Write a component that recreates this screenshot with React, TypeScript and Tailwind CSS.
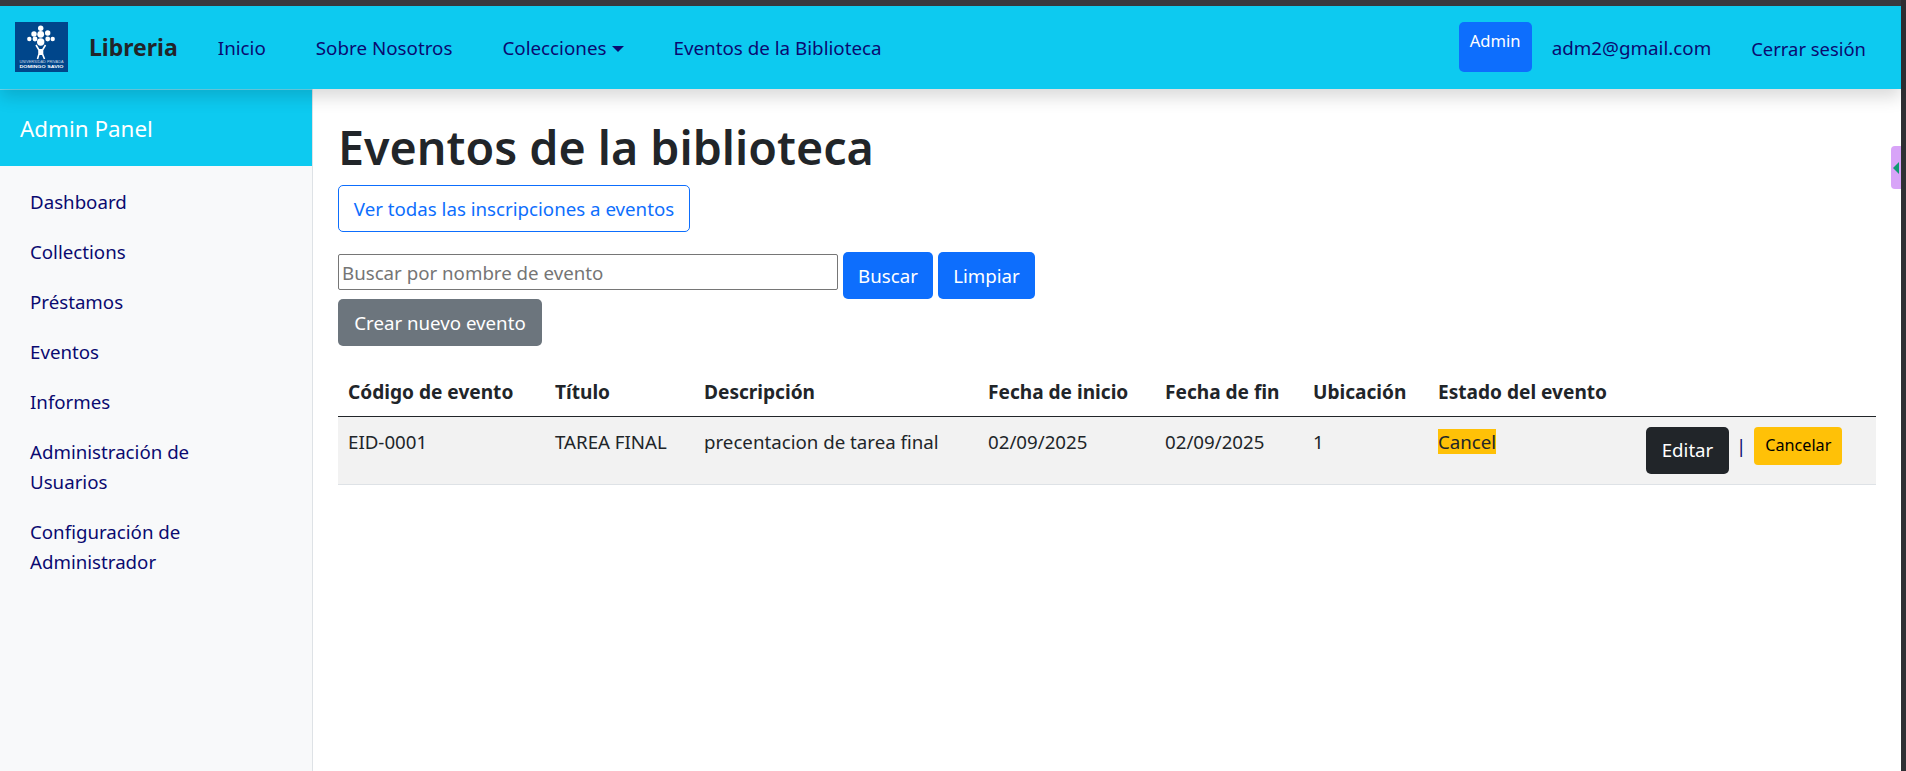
const NAV_LINK = "text-[#0a0a70] whitespace-nowrap pt-[3px]";
const NAV_SIZE = "text-[18.8px]";
const BTN = "inline-flex items-center justify-center rounded-[5px] text-[18.7px] whitespace-nowrap pt-[1px]";
const CELL = "px-[10px] pt-[11px] align-top";

const sideLinks = [
  "Dashboard",
  "Collections",
  "Préstamos",
  "Eventos",
  "Informes",
  "Administración de Usuarios",
  "Configuración de Administrador",
];

const columns = [
  { label: "Código de evento", width: "w-[207px]" },
  { label: "Título", width: "w-[149px]" },
  { label: "Descripción", width: "w-[284px]" },
  { label: "Fecha de inicio", width: "w-[177px]" },
  { label: "Fecha de fin", width: "w-[148px]" },
  { label: "Ubicación", width: "w-[125px]" },
  { label: "Estado del evento", width: "w-[198px]" },
  { label: "", width: "" },
];

function Logo() {
  const dots = [
    [25.7, 6.3, 2.7], [19, 12, 2.7], [25.7, 12.3, 3.4], [32.7, 11, 2.7],
    [14.3, 17, 2.2], [20, 17, 2.4], [25.7, 20, 3.7], [32.7, 17, 2.4], [37.7, 17, 2.2],
  ];
  return (
    <svg width="53" height="50" viewBox="0 0 53 50" className="shrink-0">
      <rect width="53" height="50" fill="#00468b" />
      {dots.map(([cx, cy, r]) => (
        <circle key={`${cx}-${cy}`} cx={cx} cy={cy} r={r} fill="#fff" />
      ))}
      <path
        d="M21 23 L24 28 L24 32 L22.5 37 M30.5 23 L27.5 28 L27.5 32 L29.5 37"
        stroke="#fff"
        strokeWidth="1.6"
        fill="none"
      />
      <rect x="24" y="27" width="3.6" height="6" fill="#fff" />
      <text x="4.5" y="41" textLength="44" lengthAdjust="spacingAndGlyphs" fontSize="2.8" fill="#c9d7e6" fontFamily="Liberation Sans, sans-serif">
        UNIVERSIDAD PRIVADA
      </text>
      <text x="4.5" y="46" textLength="44" lengthAdjust="spacingAndGlyphs" fontSize="3.4" fontWeight="700" fill="#fff" fontFamily="Liberation Sans, sans-serif">
        DOMINGO SAVIO
      </text>
    </svg>
  );
}

function Navbar() {
  return (
    <nav className="relative z-10 flex h-[83px] shrink-0 items-center bg-[#0dcaf0] pb-[1px] pl-[15px] pr-[35px] shadow-[0_8px_16px_rgba(0,0,0,0.15)]">
      <Logo />
      <span className="ml-[21px] pt-[1px] text-[23px] font-bold text-[#212529]">Libreria</span>
      <div className="ml-[40px] flex items-center gap-[50px]">
        <a className={`${NAV_LINK} ${NAV_SIZE}`}>Inicio</a>
        <a className={`${NAV_LINK} ${NAV_SIZE}`}>Sobre Nosotros</a>
        <a className={`${NAV_LINK} ${NAV_SIZE} flex items-center`}>
          Colecciones
          <span className="ml-[5px] h-0 w-0 border-x-[6px] border-t-[6px] border-x-transparent border-t-[#0a0a70]" />
        </a>
        <a className={`${NAV_LINK} ${NAV_SIZE}`}>Eventos de la Biblioteca</a>
      </div>
      <div className="ml-auto flex items-center">
        <span className="h-[50px] w-[73px] rounded-[5px] bg-[#0d6efd] pt-[7px] text-center text-[16.6px] text-white">
          Admin
        </span>
        <a className={`${NAV_LINK} ${NAV_SIZE} ml-[20px]`}>adm2@gmail.com</a>
        <a className={`${NAV_LINK} ml-[40px] text-[18.4px]`}>Cerrar sesión</a>
      </div>
    </nav>
  );
}

function Sidebar() {
  return (
    <aside className="w-[313px] shrink-0 border-r border-[#dee2e6] bg-[#f8f9fa]">
      <div className="flex h-[77px] items-center border-t border-[#6fdff5] bg-[#0dcaf0] pl-[20px] pt-[2px] text-[22.4px] text-white">
        Admin Panel
      </div>
      <ul className="flex flex-col gap-[20px] pl-[30px] pr-[50px] pt-[21px]">
        {sideLinks.map((link) => (
          <li key={link} className="text-[18.7px] leading-[30px] text-[#0a0a70]">
            {link}
          </li>
        ))}
      </ul>
    </aside>
  );
}

function EventsTable() {
  return (
    <table className="mt-[24px] w-full border-collapse text-left text-[18.7px] text-[#212529]">
      <thead>
        <tr className="h-[46px] border-b border-[#212529]">
          {columns.map((col) => (
            <th key={col.label} className={`${col.width} px-[10px] align-middle text-[19.1px] font-bold whitespace-nowrap`}>
              {col.label}
            </th>
          ))}
        </tr>
      </thead>
      <tbody>
        <tr className="h-[68px] border-b border-[#dee2e6] bg-[#f2f2f2]">
          <td className={CELL}>EID-0001</td>
          <td className={CELL}>TAREA FINAL</td>
          <td className={CELL}>precentacion de tarea final</td>
          <td className={CELL}>02/09/2025</td>
          <td className={CELL}>02/09/2025</td>
          <td className={CELL}>1</td>
          <td className={CELL}>
            <span className="bg-[#ffc107]">Cancel</span>
          </td>
          <td className="pl-[20px] pt-[10px] align-top">
            <div className="flex items-start">
              <button className={`${BTN} h-[47px] w-[83px] bg-[#212529] text-white`}>Editar</button>
              <span className="ml-[7px] mr-[8px] mt-[7px] leading-[24px] text-[#0a0a70]">|</span>
              <button className="inline-flex h-[38px] w-[88px] items-center justify-center rounded-[4px] bg-[#ffc107] text-[16.2px] text-black">
                Cancelar
              </button>
            </div>
          </td>
        </tr>
      </tbody>
    </table>
  );
}

export default function App() {
  return (
    <div className="flex h-[771px] w-[1906px] overflow-hidden bg-white font-['Noto_Sans','Open_Sans',sans-serif]">
      <div className="flex min-w-0 flex-1 flex-col">
        <div className="h-[6px] shrink-0 bg-[#3a3a40]" />
        <Navbar />
        <div className="flex min-h-0 flex-1">
          <Sidebar />
          <main className="relative min-w-0 flex-1 pl-[25px] pr-[25px] pt-[29px]">
            <h1 className="text-[46.6px] leading-[58px] font-semibold text-[#212529]">Eventos de la biblioteca</h1>
            <a className={`${BTN} mt-[9px] h-[47px] w-[352px] border border-[#0d6efd] text-[#0d6efd]`}>
              Ver todas las inscripciones a eventos
            </a>
            <div className="mt-[20px] flex items-start">
              <input
                placeholder="Buscar por nombre de evento"
                className="mt-[2px] h-[36px] w-[500px] rounded-[2px] border border-[#767676] px-[3px] pt-[1px] text-[18.7px] placeholder:text-[#757575]"
              />
              <button className={`${BTN} ml-[5px] h-[47px] w-[90px] bg-[#0d6efd] text-white`}>Buscar</button>
              <button className={`${BTN} ml-[5px] h-[47px] w-[97px] bg-[#0d6efd] text-white`}>Limpiar</button>
            </div>
            <button className={`${BTN} flex h-[47px] w-[204px] bg-[#6c757d] text-white`}>Crear nuevo evento</button>
            <EventsTable />
            <div className="absolute right-0 top-[57px] flex h-[43px] w-[10px] items-center justify-end rounded-l-[4px] bg-[#d8a4f8] pr-[2px]">
              <span className="h-0 w-0 border-y-[6px] border-r-[6px] border-y-transparent border-r-[#0e9a72]" />
            </div>
          </main>
        </div>
      </div>
      <div className="w-[5px] shrink-0 bg-[#2f2f33]" />
    </div>
  );
}
